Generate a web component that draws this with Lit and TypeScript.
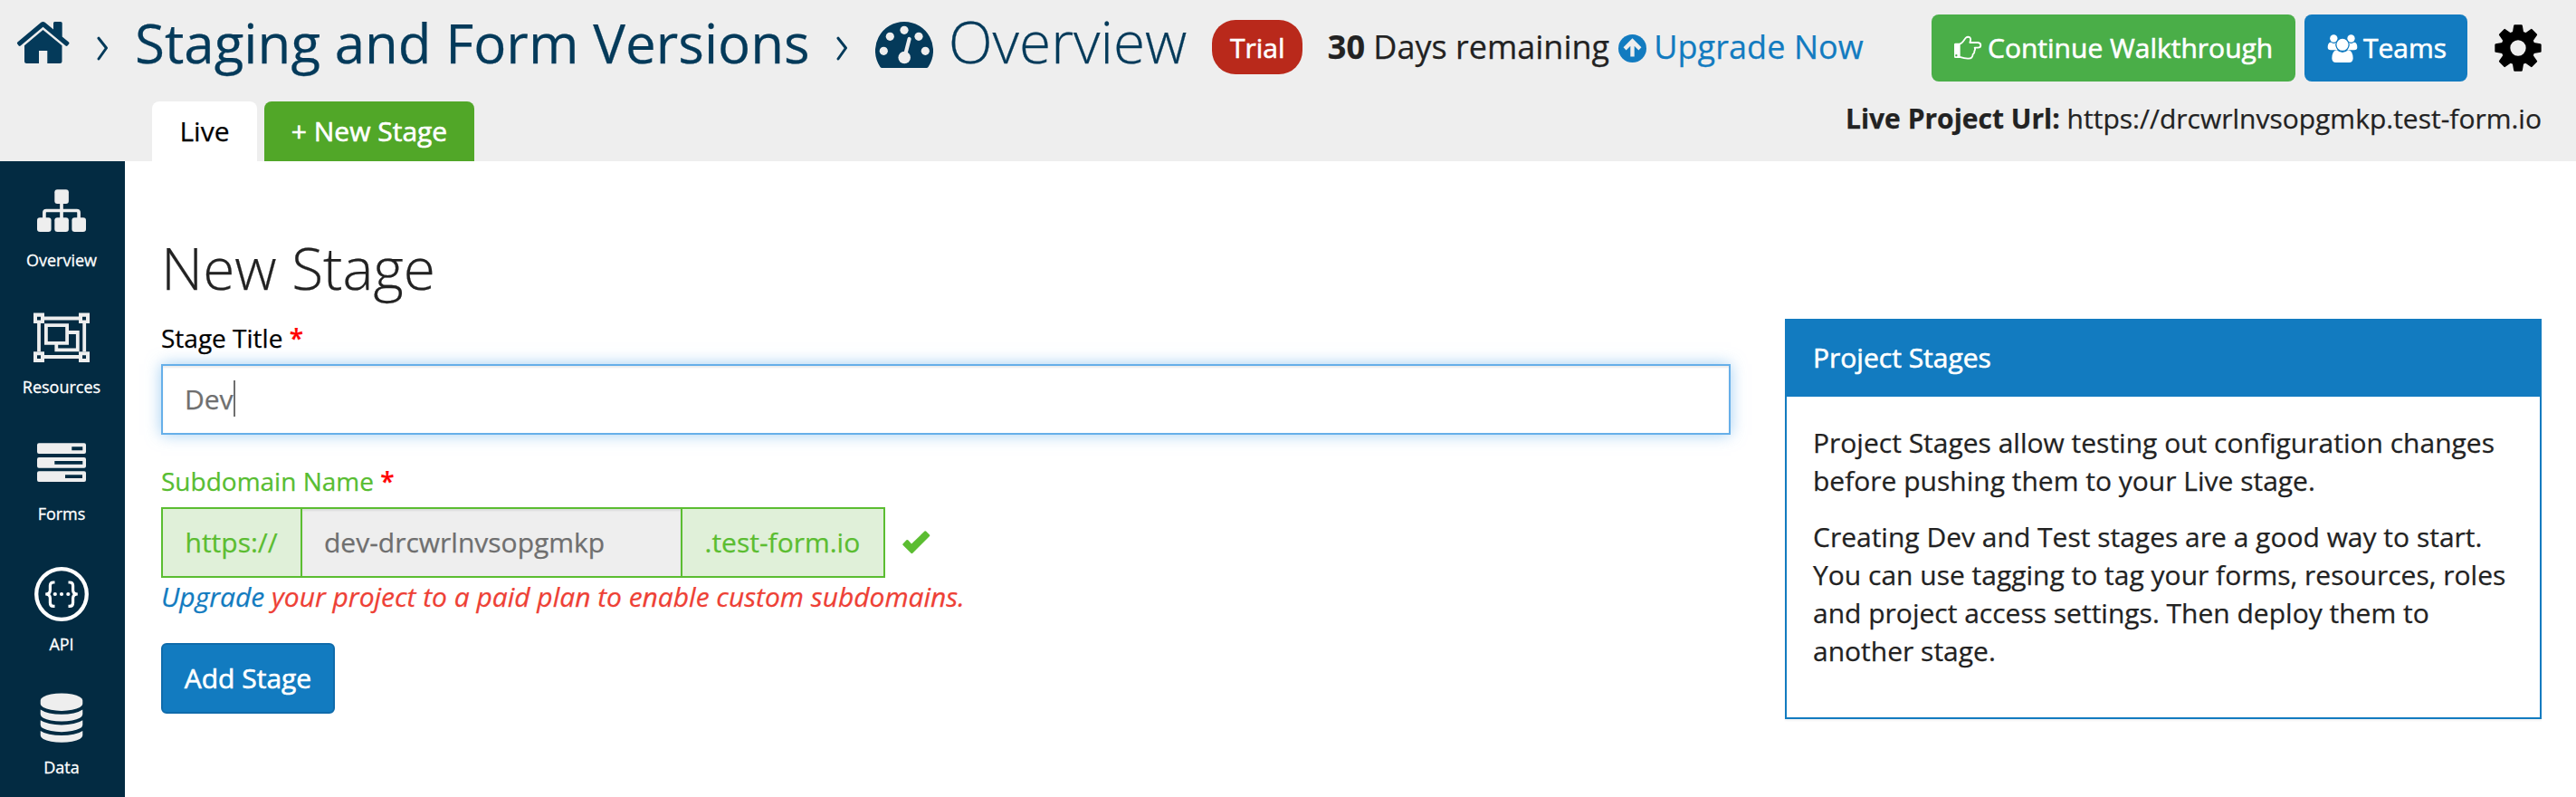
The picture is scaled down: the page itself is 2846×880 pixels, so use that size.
import { LitElement, html, svg, css } from "lit";
import { customElement, property } from "lit/decorators.js";

const sidebarIcons: Record<string, unknown> = {
  overview: svg`
    <rect x="60.3" y="31.3" width="15.6" height="15.7" rx="3"/>
    <rect x="41" y="62.3" width="15.6" height="15.7" rx="3"/>
    <rect x="60.3" y="62.3" width="15.6" height="15.7" rx="3"/>
    <rect x="79.4" y="62.3" width="15.6" height="15.7" rx="3"/>
    <path d="M48.9 63v-6.2q0-2.3 2.3-2.3h33.6q2.3 0 2.3 2.3V63M68 46v17" fill="none" stroke="#eee" stroke-width="3.7"/>`,
  resources: svg`
    <path fill-rule="evenodd" d="M37 27.5h12V39H37zM41 31.7v3.8h4v-3.8zM87 27.5h12V39H87zM91 31.7v3.8h4v-3.8zM37 70.3h12V82H37zM41 74.2v3.8h4v-3.8zM87 70.3h12V82H87zM91 74.2v3.8h4v-3.8z"/>
    <path d="M49 33.5h38M49 76h38M43 39v31.3M93.2 39v31.3" fill="none" stroke="#eee" stroke-width="3.8"/>
    <path d="M50.9 41.2h23.2v19.6H50.9zM76 49h9.8v19.4H62.3V62" fill="none" stroke="#eee" stroke-width="3.8"/>`,
  forms: svg`
    <path fill-rule="evenodd" d="M43 31.3h50q2 0 2 2V41q0 2-2 2H43q-2 0-2-2v-7.700q0-2 2-2zM79.300 35.300v4h12v-4z
      M43 47h50q2 0 2 2v7.700q0 2-2 2H43q-2 0-2-2V49q0-2 2-2zM60.300 51v3.800h31V51z
      M43 62.300h50q2 0 2 2V72q0 2-2 2H43q-2 0-2-2v-7.700q0-2 2-2zM72 66.300v3.800h19v-3.800z"/>`,
  api: svg`
    <g fill="none" stroke="#fff">
      <circle cx="68" cy="54" r="27.800" stroke-width="4.300"/>
      <path d="M60.500 41h-1.500q-3.600 0-3.600 3.600v4.800q0 4.600-5.200 4.600q5.200 0 5.200 4.600v4.800q0 3.900 3.600 3.900h1.500M75.500 41h1.500q3.600 0 3.600 3.600v4.800q0 4.600 5.200 4.600q-5.200 0-5.200 4.600v4.800q0 3.900-3.600 3.900h-1.500" stroke-width="3.200"/>
    </g>
    <g fill="#fff"><circle cx="60.800" cy="54" r="2.100"/><circle cx="68" cy="54" r="2.100"/><circle cx="75.300" cy="54" r="2.100"/></g>`,
  data: svg`
    <g transform="translate(40.85 27.5) scale(.0303)">
      <path d="M896 768q237 0 443-43t325-127v170q0 69-103 128t-280 93.500-385 34.500-385-34.500-280-93.500-103-128v-170q119 84 325 127t443 43zm0 768q237 0 443-43t325-127v170q0 69-103 128t-280 93.500-385 34.500-385-34.500-280-93.500-103-128v-170q119 84 325 127t443 43zm0-384q237 0 443-43t325-127v170q0 69-103 128t-280 93.500-385 34.500-385-34.500-280-93.500-103-128v-170q119 84 325 127t443 43zm0-1152q208 0 385 34.500t280 93.500 103 128v128q0 69-103 128t-280 93.500-385 34.500-385-34.500-280-93.500-103-128v-128q0-69 103-128t280-93.500 385-34.500z"/>
    </g>`,
};

@customElement("side-item")
class SideItem extends LitElement {
  @property() icon = "";
  @property() label = "";
  static styles = css`
    :host { display: flex; flex-direction: column; align-items: center; }
    .icon { display: block; width: 138px; height: 97px; fill: #eee; }
    .label { font-size: 18px; line-height: 24px; color: #fff; margin-right: 2px; -webkit-text-stroke: 0.3px #fff; }
  `;
  render() {
    return html`<svg class="icon" viewBox="0 0 138 97">${sidebarIcons[this.icon]}</svg><span class="label">${this.label}</span>`;
  }
}

@customElement("app-root")
class AppRoot extends LitElement {
  static styles = css`
    :host { display: block; height: 880px; overflow: hidden; background: #fff; color: #222;
      font-family: "Open Sans", sans-serif; font-size: 30px; line-height: 41px; -webkit-text-stroke: 0.25px currentColor; }
    * { box-sizing: border-box; }
    svg { display: block; flex: none; }
    a { color: #127bc0; text-decoration: none; }
    .header { height: 178px; background: #eee; }
    .bar { display: flex; justify-content: space-between; padding-right: 38px; }
    .bar.top { height: 112px; }
    .bar.bottom { height: 66px; }
    .crumbs { display: flex; align-items: flex-start; padding-left: 18px; white-space: nowrap; color: #043a5a; }
    .home { width: 60px; height: 47px; margin-top: 24px; }
    .chev { width: 14px; height: 28px; margin-top: 40px; }
    .chev.first { margin-left: 29px; margin-right: 28px; }
    .chev.second { margin-left: 29px; margin-right: 29px; }
    .project { margin-top: 6px; font-size: 60px; line-height: 82px; letter-spacing: 0.04px; }
    .gauge { width: 64px; height: 51px; margin-top: 24px; }
    .section { margin-top: 2px; margin-left: 17px; font-size: 64px; line-height: 87px; font-weight: 300; }
    .badge { width: 100px; height: 60px; margin-top: 22px; margin-left: 28px; padding-top: 10px; text-align: center;
      border-radius: 26px; background: #b9291b; color: #fff; -webkit-text-stroke: 0.6px #fff; }
    .days { margin-top: 27px; margin-left: 27.5px; font-size: 36px; line-height: 50px; color: #222; }
    .up { width: 31px; height: 31px; margin-top: 38px; margin-left: 10px; }
    .upgrade { margin-top: 27px; margin-left: 8px; font-size: 36px; line-height: 50px; letter-spacing: 0.08px; }
    .tabs { display: flex; gap: 8px; padding-left: 168px; }
    .tab { width: 116px; height: 66px; padding-top: 12px; text-align: center; border-radius: 8px 8px 0 0; background: #fff; color: #000; }
    .tab.new { width: 232px; background: #51a728; color: #fff; -webkit-text-stroke: 0.6px #fff; }
    .actions { display: flex; align-items: flex-start; padding-top: 16px; }
    .btn { display: flex; height: 74px; padding-left: 25px; border-radius: 8px; color: #fff; white-space: nowrap; -webkit-text-stroke: 0.6px #fff; }
    .btn span { padding-top: 16px; }
    .walk { width: 402px; background: #4aae48; }
    .teams { width: 180px; margin-left: 10px; background: #127bc0; }
    .hand { width: 32px; height: 27.300px; margin: 23.300px 6px 0 -1px; }
    .users { width: 34px; height: 33px; margin: 21px 6px 0 0; }
    .gear { width: 52px; height: 52px; margin: 11px 0 0 30px; }
    .url { margin-top: -2px; white-space: nowrap; }
    .body { display: flex; height: 702px; }
    .sidebar { width: 138px; flex: none; background: #032b42; overflow: hidden;
      display: grid; grid-template-rows: 140px 140px 144px 136px 142px; }
    .content { display: flex; flex: 1; align-items: flex-start; padding: 74px 38px 0 40px; }
    .form { width: 1734px; margin-right: 60px; }
    h1 { margin: 0 0 15px; font-size: 64px; line-height: 87px; font-weight: 300; }
    .label { font-size: 28px; line-height: 38px; color: #000; }
    .label.ok { margin-top: 32px; color: #57bd31; }
    .req { font-weight: 600; color: #f00; }
    .input { display: flex; height: 78px; margin-top: 10px; padding: 16px 24px; border: 2px solid #66afe9; color: #6f6f6f;
      box-shadow: inset 0 2px 2px rgba(0,0,0,.075), 0 0 16px rgba(102,175,233,.6); }
    .caret { width: 2px; height: 40px; background: #6f6f6f; }
    .row { display: flex; margin-top: 10px; }
    .group { display: flex; width: 800px; height: 78px; border: 2px solid #5bbd31; color: #5bbd31; }
    .addon { padding: 16px 0 0 24.5px; background: #e0f0d9; }
    .addon.pre { width: 154px; border-right: 2px solid #5bbd31; }
    .addon.post { width: 224px; border-left: 2px solid #5bbd31; }
    .field { flex: 1; padding: 16px 24px 0; background: #eee; color: #6f6f6f; box-shadow: inset 0 2px 2px rgba(0,0,0,.075); }
    .check { width: 31px; height: 26px; margin: 26px 0 0 19px; }
    .help { font-style: italic; color: #ee4035; letter-spacing: -0.02px; }
    .submit { width: 192px; height: 78px; margin-top: 31px; padding-top: 16px; text-align: center; border: 2px solid #0f6bab;
      border-radius: 6px; background: #127bc0; color: #fff; -webkit-text-stroke: 0.6px #fff; }
    .panel { flex: 1; height: 442px; margin-top: 100px; border: 2px solid #127bc0; box-shadow: 0 2px 2px rgba(0,0,0,.05); }
    .ptitle { height: 84px; padding: 20px 29px 0; background: #127bc0; color: #fff; -webkit-text-stroke: 0.6px #fff; }
    .pbody { padding: 30px 29px 0; line-height: 42px; }
    .pbody p { margin: 0 0 20px; }
  `;

  private chevron(cls: string) {
    return html`<svg class="chev ${cls}" viewBox="0 0 14 28"><path d="M2 2.200L10.500 13L2 25" fill="none" stroke="#043a5a" stroke-width="3" stroke-linecap="round" stroke-linejoin="round"/></svg>`;
  }

  render() {
    const items = [["overview", "Overview"], ["resources", "Resources"], ["forms", "Forms"], ["api", "API"], ["data", "Data"]];
    const dots = [[32, 9.3], [16.3, 16.3], [48, 16.3], [9.3, 32.3], [55.3, 32.3]];
    return html`
      <div class="header">
        <div class="bar top">
          <div class="crumbs">
            <svg class="home" viewBox="18 24 60 47" fill="#043a5a">
              <path d="M47.500 24q1.200 0 2.200.800L59 32.500V25.500q0-1.500 1.500-1.500H67q1.700 0 1.700 1.500V40.500L76 46.500q1 1 .2 2L74.500 50.500q-1 .8-2 0L47.500 29.800 22.700 50.500q-1 .8-2 0L19.200 48.500q-.8-1 .2-2L45.300 24.800q1-.8 2.200-.8z"/>
              <path d="M47.500 33L68.500 50.300V67.500q0 2.500-2.500 2.500H52.300V56H43V70H29.500Q27 70 27 67.500V50.300z"/>
            </svg>
            ${this.chevron("first")}
            <span class="project">Staging and Form Versions</span>
            ${this.chevron("second")}
            <svg class="gauge" viewBox="0 0 64 51">
              <path d="M32 0A32 32 0 0 1 58.500 50Q57.800 51 56.500 51H7.500Q6.200 51 5.500 50A32 32 0 0 1 32 0z" fill="#043a5a"/>
              <g fill="#eee">
                ${dots.map(([x, y]) => svg`<circle cx=${x} cy=${y} r="4.600"/>`)}
                <circle cx="32.200" cy="39.500" r="6.800"/>
              </g>
              <path d="M37.600 19L33 37" stroke="#eee" stroke-width="4.200" stroke-linecap="round"/>
            </svg>
            <span class="section">Overview</span>
            <span class="badge">Trial</span>
            <span class="days"><b>30</b> Days remaining</span>
            <svg class="up" viewBox="447 114 92 92">
              <circle cx="493" cy="160" r="46" fill="#127bc0"/>
              <path d="M493 187V137M468 161L493 136L518 161" fill="none" stroke="#eee" stroke-width="13"/>
            </svg>
            <a class="upgrade">Upgrade Now</a>
          </div>
          <div class="actions">
            <div class="btn walk">
              <svg class="hand" viewBox="24 58 96 82">
                <path d="M45 87C55 85 60 72 66 66Q72 61 79 65Q84 70 79 82H106Q115 83 115 91Q115 99 106 99H95Q98 105 94 110Q95 117 89 121Q88 135 75 135Q64 136 45 130" fill="none" stroke="#fff" stroke-width="5.500" stroke-linejoin="round"/>
                <path fill-rule="evenodd" fill="#fff" d="M31 84H47V133H31Q27 133 27 129V88Q27 84 31 84zM34 121a3.500 3.500 0 1 0 .1 0z"/>
              </svg><span>Continue Walkthrough</span>
            </div>
            <div class="btn teams">
              <svg class="users" viewBox="1258 51 102 99" fill="#fff">
                <circle cx="1280" cy="67.500" r="12.500"/><circle cx="1337.500" cy="67.500" r="12.500"/>
                <path d="M1271 80Q1280 87 1288 82Q1284 96 1294 106H1270Q1260 106 1260 97Q1260 80 1271 80zM1347 80Q1338 87 1330 82Q1334 96 1324 106H1348Q1358 106 1358 97Q1358 80 1347 80z"/>
                <path d="M1290 106Q1309 122 1328 106Q1343 108 1344 133Q1344 147 1331 147H1287Q1274 147 1274 133Q1275 108 1290 106z"/>
                <circle cx="1309" cy="88" r="23" fill="#127bc0"/><circle cx="1309" cy="88" r="19.500"/>
              </svg><span>Teams</span>
            </div>
            <svg class="gear" viewBox="-78 -78 156 156">
              ${[0, 45, 90, 135, 180, 225, 270, 315].map((a) => svg`<path transform="rotate(${a})" d="M-19 -48L-14.500 -74Q-14 -77 -11 -77H11Q14 -77 14.500 -74L19 -48z"/>`)}
              <circle r="41" fill="none" stroke="#000" stroke-width="30"/>
            </svg>
          </div>
        </div>
        <div class="bar bottom">
          <div class="tabs"><span class="tab">Live</span><span class="tab new">+ New Stage</span></div>
          <div class="url"><b>Live Project Url:</b> https://drcwrlnvsopgmkp.test-form.io</div>
        </div>
      </div>
      <div class="body">
        <div class="sidebar">${items.map(([i, l]) => html`<side-item icon=${i} label=${l}></side-item>`)}</div>
        <div class="content">
          <div class="form">
            <h1>New Stage</h1>
            <div class="label">Stage Title <span class="req">*</span></div>
            <div class="input">Dev<span class="caret"></span></div>
            <div class="label ok">Subdomain Name <span class="req">*</span></div>
            <div class="row">
              <div class="group">
                <span class="addon pre">https://</span><span class="field">dev-drcwrlnvsopgmkp</span><span class="addon post">.test-form.io</span>
              </div>
              <svg class="check" viewBox="997 586 31 26"><path d="M997.500 600.500L1001.500 596.300Q1002.500 595.500 1003.500 596.500L1007 600.500L1021.500 586.600Q1022.500 585.900 1023.300 586.700L1027 590.500Q1027.700 591.300 1027 592L1008.300 610.800Q1007.400 611.500 1006.500 610.700L997.700 602Q997 601.300 997.500 600.500z" fill="#5bbd31"/></svg>
            </div>
            <div class="help"><a>Upgrade</a> your project to a paid plan to enable custom subdomains.</div>
            <div class="submit">Add Stage</div>
          </div>
          <div class="panel">
            <div class="ptitle">Project Stages</div>
            <div class="pbody">
              <p>Project Stages allow testing out configuration changes before pushing them to your Live stage.</p>
              <p>Creating Dev and Test stages are a good way to start. You can use tagging to tag your forms, resources, roles and project access settings. Then deploy them to another stage.</p>
            </div>
          </div>
        </div>
      </div>`;
  }
}
